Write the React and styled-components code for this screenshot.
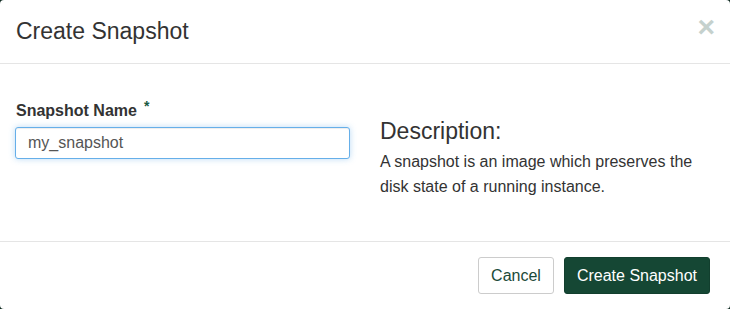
import styled, { createGlobalStyle } from "styled-components";

const Global = createGlobalStyle`
  html, body {
    margin: 0;
    padding: 0;
    background: #0f2a20;
  }
  body {
    font-family: "Liberation Sans", Arial, sans-serif;
    color: #333;
  }
`;

const Modal = styled.div`
  width: 730px;
  height: 309px;
  background: #fff;
  border-radius: 4px;
  display: flex;
  flex-direction: column;
  box-sizing: border-box;
`;

const Header = styled.div`
  height: 64px;
  box-sizing: border-box;
  padding: 0 15px 0 16px;
  border-bottom: 1px solid #e5e5e5;
  display: flex;
  align-items: center;
  justify-content: space-between;
`;

const Title = styled.h4`
  margin: 0;
  font-size: 23px;
  font-weight: normal;
  color: #333;
  line-height: 1.1;
`;

const Close = styled.button`
  border: 0;
  background: none;
  padding: 0;
  margin-top: -10px;
  font-family: "Liberation Sans", Arial, sans-serif;
  font-size: 30px;
  font-weight: bold;
  line-height: 1;
  color: #c5d1cd;
  cursor: pointer;
`;

const Body = styled.div`
  flex: 1;
  display: grid;
  grid-template-columns: 1fr 1fr;
  border-bottom: 1px solid #e5e5e5;
`;

const Column = styled.div`
  padding: ${(p) => p.$top}px 15px 0 15px;
`;

const Label = styled.label`
  display: block;
  font-size: 16px;
  font-weight: bold;
  line-height: 20px;
  margin: 0 0 6px 1px;
`;

const Required = styled.span`
  color: #1b5a43;
  font-size: 14px;
  vertical-align: top;
  margin-left: 7px;
  position: relative;
  top: -5px;
`;

const Input = styled.input`
  display: block;
  width: 100%;
  height: 32px;
  box-sizing: border-box;
  padding: 0 12px;
  font-family: "Liberation Sans", Arial, sans-serif;
  font-size: 16px;
  color: #555;
  border: 1px solid #66afe9;
  border-radius: 3px;
  outline: none;
  box-shadow: inset 0 1px 1px rgba(0, 0, 0, 0.075), 0 0 6px rgba(102, 175, 233, 0.45);
`;

const Heading = styled.h3`
  margin: 0 0 4px;
  font-size: 23px;
  font-weight: normal;
  line-height: 28px;
  color: #333;
`;

const Text = styled.p`
  margin: 0;
  font-size: 16px;
  line-height: 25px;
  color: #333;
`;

const Footer = styled.div`
  height: 67px;
  box-sizing: border-box;
  padding: 0 20px 0 15px;
  display: flex;
  align-items: center;
  justify-content: flex-end;
  gap: 10px;
`;

const Button = styled.button`
  height: 37px;
  padding: 0 12px;
  font-family: "Liberation Sans", Arial, sans-serif;
  font-size: 16px;
  border-radius: 3px;
  border: 1px solid ${(p) => (p.$primary ? "#123f2e" : "#ccc")};
  background: ${(p) => (p.$primary ? "#154734" : "#fff")};
  color: ${(p) => (p.$primary ? "#fff" : "#1b4a39")};
  cursor: pointer;
`;

export default function App() {
  return (
    <>
      <Global />
      <Modal>
        <Header>
          <Title>Create Snapshot</Title>
          <Close aria-label="Close">×</Close>
        </Header>
        <Body>
          <Column $top={37}>
            <Label>
              Snapshot Name<Required>*</Required>
            </Label>
            <Input defaultValue="my_snapshot" />
          </Column>
          <Column $top={53}>
            <Heading>Description:</Heading>
            <Text>
              A snapshot is an image which preserves the disk state of a running
              instance.
            </Text>
          </Column>
        </Body>
        <Footer>
          <Button>Cancel</Button>
          <Button $primary>Create Snapshot</Button>
        </Footer>
      </Modal>
    </>
  );
}
